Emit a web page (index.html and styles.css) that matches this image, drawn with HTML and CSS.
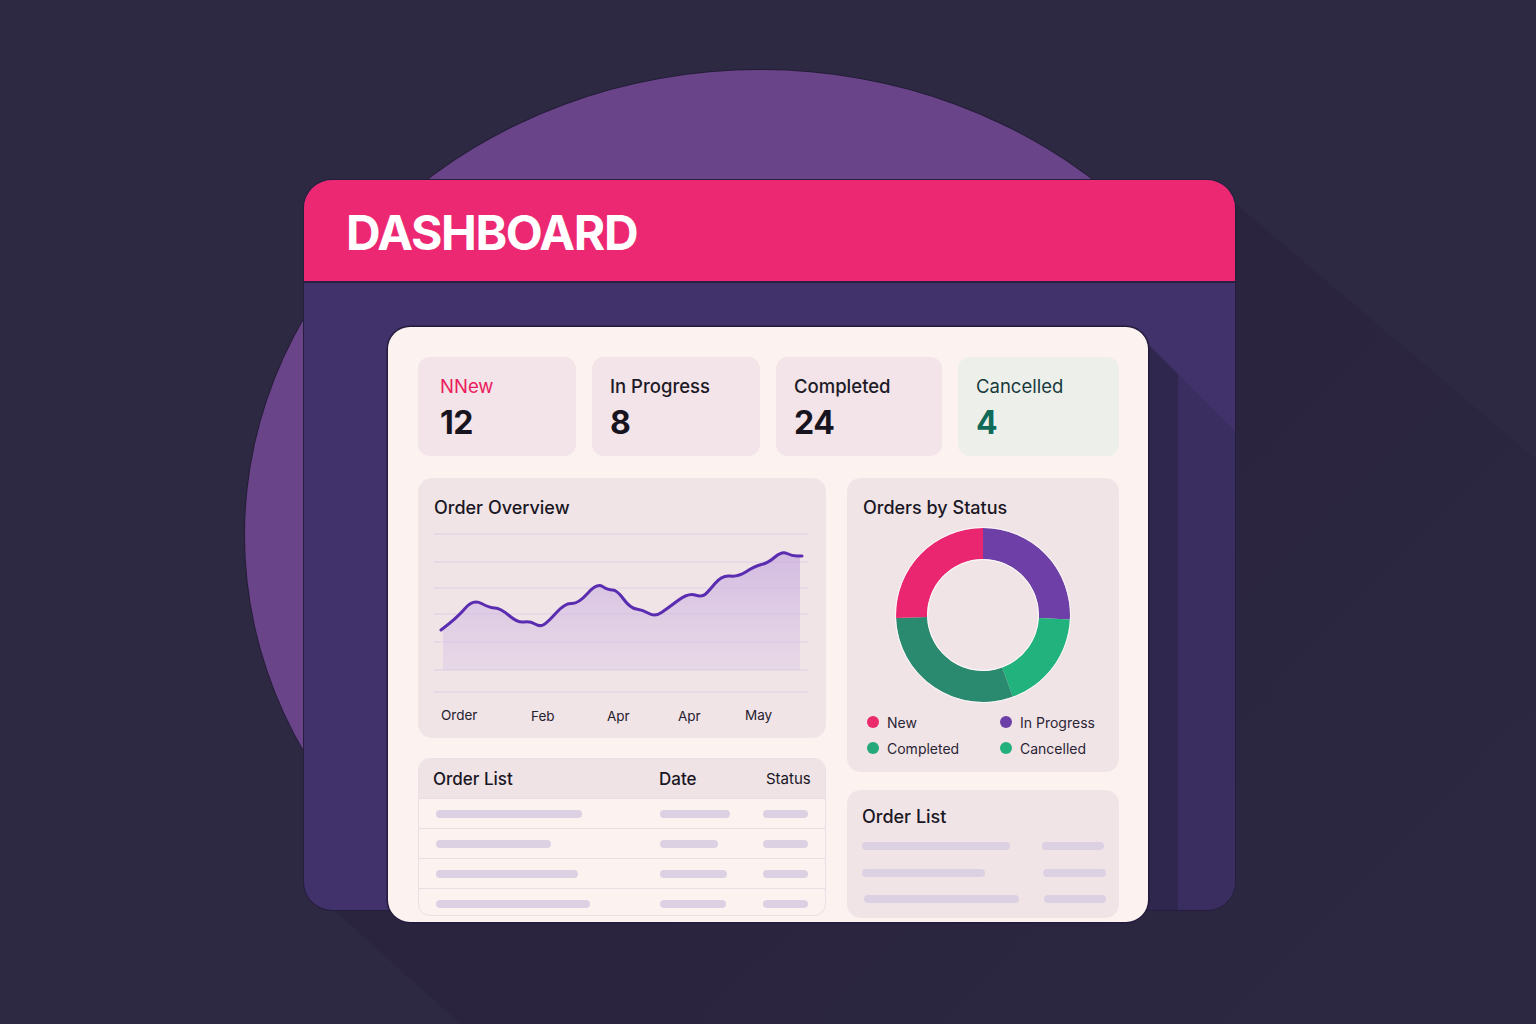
FILE: index.html
```html
<!DOCTYPE html>
<html lang="en">
<head>
<meta charset="utf-8">
<title>Dashboard</title>
<link rel="stylesheet" href="styles.css">
</head>
<body>
<div class="stage">
  <div class="bg-circle"></div>
  <svg class="long-shadow" width="1536" height="1024" viewBox="0 0 1536 1024">
    <defs>
      <linearGradient id="ls" gradientUnits="userSpaceOnUse" x1="1000" y1="600" x2="1400" y2="1000">
        <stop offset="0" stop-color="#2a243e"/>
        <stop offset="0.6" stop-color="#2c2741"/>
        <stop offset="1" stop-color="#2d2842"/>
      </linearGradient>
    </defs>
    <polygon fill="url(#ls)" points="1222,192 2222,1042 1318,1796 318,896 700,500"/>
  </svg>
  <div class="frame">
    <div class="card-shadow"></div>
    <header class="frame-head"><h1>DASHBOARD</h1></header>
    <div class="frame-body">
      <main class="card">
        <section class="stats">
          <div class="stat stat--new"><div class="stat-label">NNew</div><div class="stat-num">12</div></div>
          <div class="stat"><div class="stat-label">In Progress</div><div class="stat-num">8</div></div>
          <div class="stat"><div class="stat-label">Completed</div><div class="stat-num">24</div></div>
          <div class="stat stat--cancel"><div class="stat-label">Cancelled</div><div class="stat-num">4</div></div>
        </section>
        <div class="cols">
          <div class="col col--left">
            <section class="panel chart-panel">
              <h2 class="panel-title">Order Overview</h2>
              <svg class="chart" width="408" height="219" viewBox="0 0 408 219">
                <defs>
                  <linearGradient id="area" x1="0" y1="0" x2="0" y2="1">
                    <stop offset="0" stop-color="#c9addf" stop-opacity="0.75"/>
                    <stop offset="1" stop-color="#d9c6e6" stop-opacity="0.4"/>
                  </linearGradient>
                </defs>
                <g stroke="#dccfe4" stroke-width="1">
                  <line x1="16" y1="15" x2="390" y2="15"/>
                  <line x1="16" y1="43" x2="390" y2="43"/>
                  <line x1="16" y1="69" x2="390" y2="69"/>
                  <line x1="16" y1="95" x2="390" y2="95"/>
                  <line x1="16" y1="123" x2="390" y2="123"/>
                  <line x1="16" y1="151" x2="390" y2="151"/>
                  <line x1="16" y1="173" x2="390" y2="173"/>
                </g>
                <path fill="url(#area)" d="M25,110 Q39,99 47,89.5 Q55,80 63.5,84.5 Q72,89 77,89 Q82,89 91,96.5 Q100,104 106,103 Q112,102 117,105 Q122,108 126,105.5 Q130,103 138.5,93.5 Q147,84 153.5,84.5 Q160,85 169.5,74.5 Q179,64 184.5,67.5 Q190,71 194.5,71 Q199,71 205.5,80 Q212,89 218.5,90 Q225,91 231,94.5 Q237,98 243.5,93.5 Q250,89 260,81.5 Q270,74 277,76 Q284,78 287,75.5 Q290,73 297,64.5 Q304,56 312,57 Q320,58 328.5,52.5 Q337,47 343.5,45.5 Q350,44 357,38 Q364,32 369,34.5 Q374,37 379,37 L382,37 L382,151 L25,151 Z"/>
                <path fill="none" stroke="#5a2db0" stroke-width="3" stroke-linejoin="round" stroke-linecap="round" d="M23,111 Q39,99 47,89.5 Q55,80 63.5,84.5 Q72,89 77,89 Q82,89 91,96.5 Q100,104 106,103 Q112,102 117,105 Q122,108 126,105.5 Q130,103 138.5,93.5 Q147,84 153.5,84.5 Q160,85 169.5,74.5 Q179,64 184.5,67.5 Q190,71 194.5,71 Q199,71 205.5,80 Q212,89 218.5,90 Q225,91 231,94.5 Q237,98 243.5,93.5 Q250,89 260,81.5 Q270,74 277,76 Q284,78 287,75.5 Q290,73 297,64.5 Q304,56 312,57 Q320,58 328.5,52.5 Q337,47 343.5,45.5 Q350,44 357,38 Q364,32 369,34.5 Q374,37 379,37 L384,37"/>
                <g class="axis">
                  <text x="23" y="201">Order</text>
                  <text x="113" y="202">Feb</text>
                  <text x="189" y="202">Apr</text>
                  <text x="260" y="202">Apr</text>
                  <text x="327" y="201">May</text>
                </g>
              </svg>
            </section>
            <section class="table">
              <div class="t-head">
                <span class="th th-name">Order List</span>
                <span class="th th-date">Date</span>
                <span class="th th-status">Status</span>
              </div>
              <div class="t-row"><span class="bar" style="width:146px"></span><span class="bar" style="width:70px"></span><span class="bar" style="width:45px"></span></div>
              <div class="t-row"><span class="bar" style="width:115px"></span><span class="bar" style="width:58px"></span><span class="bar" style="width:45px"></span></div>
              <div class="t-row"><span class="bar" style="width:142px"></span><span class="bar" style="width:67px"></span><span class="bar" style="width:45px"></span></div>
              <div class="t-row"><span class="bar" style="width:154px"></span><span class="bar" style="width:66px"></span><span class="bar" style="width:45px"></span></div>
            </section>
          </div>
          <div class="col col--right">
            <section class="panel status-panel">
              <h2 class="panel-title">Orders by Status</h2>
              <svg class="donut" width="272" height="190" viewBox="0 0 272 190">
                <path fill="#6e3fa6" d="M136,9 A87,87 0 0 1 222.88,100.55 L191.92,98.93 A56,56 0 0 0 136,40 Z"/>
                <path fill="#21b27d" d="M222.88,100.55 A87,87 0 0 1 165.75,177.75 L155.15,148.62 A56,56 0 0 0 191.92,98.93 Z"/>
                <path fill="#2a8a6f" d="M165.75,177.75 A87,87 0 0 1 49.05,99.04 L80.03,97.95 A56,56 0 0 0 155.15,148.62 Z"/>
                <path fill="#ea2670" d="M49.05,99.04 A87,87 0 0 1 136,9 L136,40 A56,56 0 0 0 80.03,97.95 Z"/>
                <circle cx="136" cy="96" r="87.5" fill="none" stroke="#ffffff" stroke-opacity="0.7" stroke-width="1"/>
                <circle cx="136" cy="96" r="55.5" fill="none" stroke="#ffffff" stroke-opacity="0.8" stroke-width="1"/>
              </svg>
              <ul class="legend">
                <li><i class="dot dot--new"></i>New</li>
                <li><i class="dot dot--prog"></i>In Progress</li>
                <li><i class="dot dot--comp"></i>Completed</li>
                <li><i class="dot dot--canc"></i>Cancelled</li>
              </ul>
            </section>
            <section class="panel list-panel">
              <h2 class="panel-title list-title">Order List</h2>
              <div class="l-row"><span class="bar" style="width:148px"></span><span class="bar" style="width:62px"></span></div>
              <div class="l-row"><span class="bar" style="width:123px"></span><span class="bar bar--r2" style="width:63px"></span></div>
              <div class="l-row l-row--3"><span class="bar" style="width:155px"></span><span class="bar" style="width:62px"></span></div>
            </section>
          </div>
        </div>
      </main>
    </div>
  </div>
</div>
</body>
</html>
```
FILE: styles.css
```css
* { box-sizing: border-box; }
html, body { margin: 0; padding: 0; }
body {
  background: #2e2942;
  font-family: "Inter", "Noto Sans", "Liberation Sans", sans-serif;
  color: #1b1726;
}
.stage {
  position: relative;
  width: 1536px;
  height: 1024px;
  overflow: hidden;
  padding: 180px 0 0 304px;
}
.bg-circle {
  position: absolute;
  left: 245px;
  top: 70px;
  width: 1030px;
  height: 930px;
  border-radius: 50%;
  background: #6a4488;
  box-shadow: 0 0 0 1px rgba(30, 22, 50, 0.6);
}
.long-shadow {
  position: absolute;
  left: 0;
  top: 0;
}
.frame {
  position: relative;
  width: 931px;
  height: 730px;
  border-radius: 28px;
  background: #42326b;
  box-shadow: 0 0 0 1px #251e3e;
}
.card-shadow {
  position: absolute;
  left: 830px;
  top: 150px;
  width: 101px;
  height: 580px;
  border-bottom-right-radius: 28px;
  background: linear-gradient(to right, #30274f 0, #30274f 44px, #3a2d5f 44px, #3a2d5f 100%);
  clip-path: polygon(0 0, 101px 101px, 100% 100%, 0 100%);
}
.frame-head {
  height: 103px;
  background: #ec2873;
  border-radius: 28px 28px 0 0;
  border-bottom: 2px solid #2a2046;
  display: flex;
  align-items: center;
  padding-left: 42px;
}
.frame-head h1 {
  margin: 0;
  color: #ffffff;
  font-size: 48px;
  font-weight: 700;
  letter-spacing: -1.4px;
  line-height: 1;
  padding-top: 4px;
}
.frame-body {
  padding: 44px 0 0 84px;
}
.card {
  position: relative;
  width: 760px;
  height: 595px;
  background: #fcf2f0;
  border-radius: 22px;
  padding: 30px 29px 0 30px;
  box-shadow: 0 0 0 1.5px #221b3c;
}
.stats {
  display: grid;
  grid-template-columns: 158px 168px 166px 161px;
  column-gap: 16px;
  height: 99px;
}
.stat {
  background: #f2e4e8;
  border-radius: 12px;
  padding: 18px 18px 0 18px;
}
.stat--new { padding-left: 22px; }
.stat--cancel { background: #edefeb; }
.stat-label {
  font-size: 18.5px;
  line-height: 22px;
  font-weight: 500;
  color: #1d1a27;
}
.stat--new .stat-label { color: #ea1a5c; font-weight: 400; }
.stat--cancel .stat-label { color: #173a3b; font-weight: 400; }
.stat-num {
  margin-top: 8px;
  font-size: 32px;
  line-height: 36px;
  font-weight: 700;
  letter-spacing: -0.5px;
  color: #17141f;
}
.stat--cancel .stat-num { color: #0f6a58; }
.cols {
  display: flex;
  gap: 21px;
  margin-top: 22px;
}
.col { display: flex; flex-direction: column; }
.col--left { width: 408px; gap: 20px; }
.col--right { width: 272px; gap: 18px; }
.panel {
  background: #f1e4e7;
  border-radius: 14px;
}
.panel-title {
  margin: 0;
  padding: 19px 16px 0;
  height: 41px;
  font-size: 18px;
  line-height: 22px;
  font-weight: 500;
  color: #1a1724;
}
.chart-panel { height: 260px; }
.chart { display: block; }
.axis text {
  font-family: "Inter", "Noto Sans", sans-serif;
  font-size: 13.5px;
  fill: #25212e;
}
.status-panel { height: 294px; }
.donut { display: block; }
.legend {
  list-style: none;
  margin: 0;
  padding: 0 0 0 20px;
  display: grid;
  grid-template-columns: 133px 1fr;
  grid-auto-rows: 26px;
}
.legend li {
  display: flex;
  align-items: center;
  font-size: 14px;
  color: #2a2535;
}
.dot {
  display: inline-block;
  width: 12px;
  height: 12px;
  border-radius: 50%;
  margin-right: 8px;
}
.dot--new { background: #ea2a6b; }
.dot--prog { background: #6b3fa5; }
.dot--comp { background: #25a97a; }
.dot--canc { background: #22b07d; }
.table {
  height: 158px;
  background: #fcf2f0;
  border: 1px solid #eadfe4;
  border-radius: 12px;
  overflow: hidden;
}
.t-head {
  height: 39px;
  background: #efe3e6;
  display: grid;
  grid-template-columns: 226px 107px 1fr;
  align-items: center;
  padding-left: 14px;
}
.th { font-size: 17px; font-weight: 500; color: #1a1724; }
.th-status { font-size: 15px; font-weight: 400; }
.t-row {
  height: 30px;
  border-top: 1px solid #eadde4;
  display: grid;
  grid-template-columns: 224px 103px 1fr;
  align-items: center;
  padding-left: 17px;
}
.bar {
  display: block;
  height: 8px;
  border-radius: 4px;
  background: #dcd1e3;
}
.list-panel {
  height: 128px;
  padding: 0 0 0 15px;
}
.list-title {
  padding: 16px 0 0 0;
  height: 43px;
}
.l-row {
  height: 26.5px;
  display: grid;
  grid-template-columns: 180px 1fr;
  align-items: center;
}
.bar--r2 { margin-left: 1px; }
.l-row--3 { padding-left: 2px; }
```
